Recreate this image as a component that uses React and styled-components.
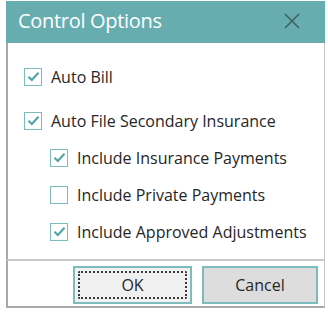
import React, { useState } from "react";
import styled, { createGlobalStyle } from "styled-components";

const GlobalStyle = createGlobalStyle`
  body {
    margin: 0;
    background: #ffffff;
    font-family: "Open Sans", "Noto Sans", sans-serif;
  }
`;

const options = [
  { id: "autoBill", label: "Auto Bill", indent: false },
  { id: "autoFile", label: "Auto File Secondary Insurance", indent: false },
  { id: "insPay", label: "Include Insurance Payments", indent: true },
  { id: "privPay", label: "Include Private Payments", indent: true },
  { id: "adjust", label: "Include Approved Adjustments", indent: true },
];

export default function App() {
  const [values, setValues] = useState({
    autoBill: true,
    autoFile: true,
    insPay: true,
    privPay: false,
    adjust: true,
  });

  const toggle = (id) => setValues({ ...values, [id]: !values[id] });

  return (
    <Page>
      <GlobalStyle />
      <Dialog>
        <TitleBar>
          <Title>Control Options</Title>
          <CloseButton aria-label="Close">
            <svg width="16" height="16" viewBox="0 0 16 16">
              <path
                d="M1 1 L15 15 M15 1 L1 15"
                stroke="#3f5f60"
                strokeWidth="1.5"
                fill="none"
              />
            </svg>
          </CloseButton>
        </TitleBar>
        <Body>
          {options.map((opt) => (
            <Row key={opt.id} $indent={opt.indent} $first={opt.id === "autoBill"}>
              <Box onClick={() => toggle(opt.id)}>
                {values[opt.id] && (
                  <svg width="13" height="11" viewBox="0 0 13 11">
                    <path
                      d="M1.5 5.8 L4.8 9 L11.5 1.8"
                      stroke="#4da3a6"
                      strokeWidth="2"
                      fill="none"
                    />
                  </svg>
                )}
              </Box>
              <Label onClick={() => toggle(opt.id)}>{opt.label}</Label>
            </Row>
          ))}
        </Body>
        <Footer>
          <Button $focused>
            <Focus>OK</Focus>
          </Button>
          <Button $secondary>Cancel</Button>
        </Footer>
      </Dialog>
    </Page>
  );
}

const Page = styled.div`
  width: 328px;
  height: 316px;
  padding: 1px 0 0 6px;
  box-sizing: border-box;
`;

const Dialog = styled.div`
  width: 319px;
  height: 307px;
  display: flex;
  flex-direction: column;
  box-sizing: border-box;
`;

const TitleBar = styled.div`
  height: 42px;
  background: #67adb0;
  display: flex;
  align-items: center;
  justify-content: space-between;
  padding: 0 25px 0 12px;
  flex-shrink: 0;
`;

const Title = styled.div`
  color: #ffffff;
  font-size: 20px;
  letter-spacing: -0.3px;
  margin-top: -3px;
`;

const CloseButton = styled.div`
  width: 16px;
  height: 16px;
  display: flex;
  margin-top: -2px;
`;

const Body = styled.div`
  flex: 1;
  border-left: 2px solid #a9a9a9;
  border-right: 1px solid #c4c4c4;
  padding: 24px 0 0 16px;
  display: flex;
  flex-direction: column;
`;

const Row = styled.div`
  display: flex;
  align-items: center;
  height: 19px;
  margin-left: ${(p) => (p.$indent ? "26px" : "0")};
  margin-bottom: ${(p) => (p.$first ? "25px" : "18px")};
`;

const Box = styled.div`
  width: 16px;
  height: 16px;
  border: 1.5px solid #7dbcbd;
  background: #ffffff;
  display: flex;
  align-items: center;
  justify-content: center;
  margin-right: 9px;
  flex-shrink: 0;
`;

const Label = styled.span`
  font-size: 16px;
  color: #262626;
  letter-spacing: 0;
  white-space: nowrap;
`;

const Footer = styled.div`
  height: 49px;
  flex-shrink: 0;
  border-top: 2px solid #c9c9c9;
  border-left: 2px solid #a9a9a9;
  border-right: 1px solid #c4c4c4;
  border-bottom: 2px solid #a9a9a9;
  display: flex;
  justify-content: flex-end;
  align-items: flex-start;
  gap: 10px;
  padding: 5px 6px 0 0;
  box-sizing: border-box;
`;

const Button = styled.div`
  width: ${(p) => (p.$secondary ? "116px" : "119px")};
  height: 38px;
  box-sizing: border-box;
  border: 2px solid #7dbcbd;
  background: ${(p) => (p.$secondary ? "#dddddd" : "#f0f0f0")};
  display: flex;
  align-items: center;
  justify-content: center;
  padding: ${(p) => (p.$focused ? "3px" : "0")};
  font-size: 16px;
  color: #262626;
`;

const Focus = styled.div`
  flex: 1;
  align-self: stretch;
  border: 2px dotted #3a3a3a;
  border-radius: 2px;
  display: flex;
  align-items: center;
  justify-content: center;
`;
